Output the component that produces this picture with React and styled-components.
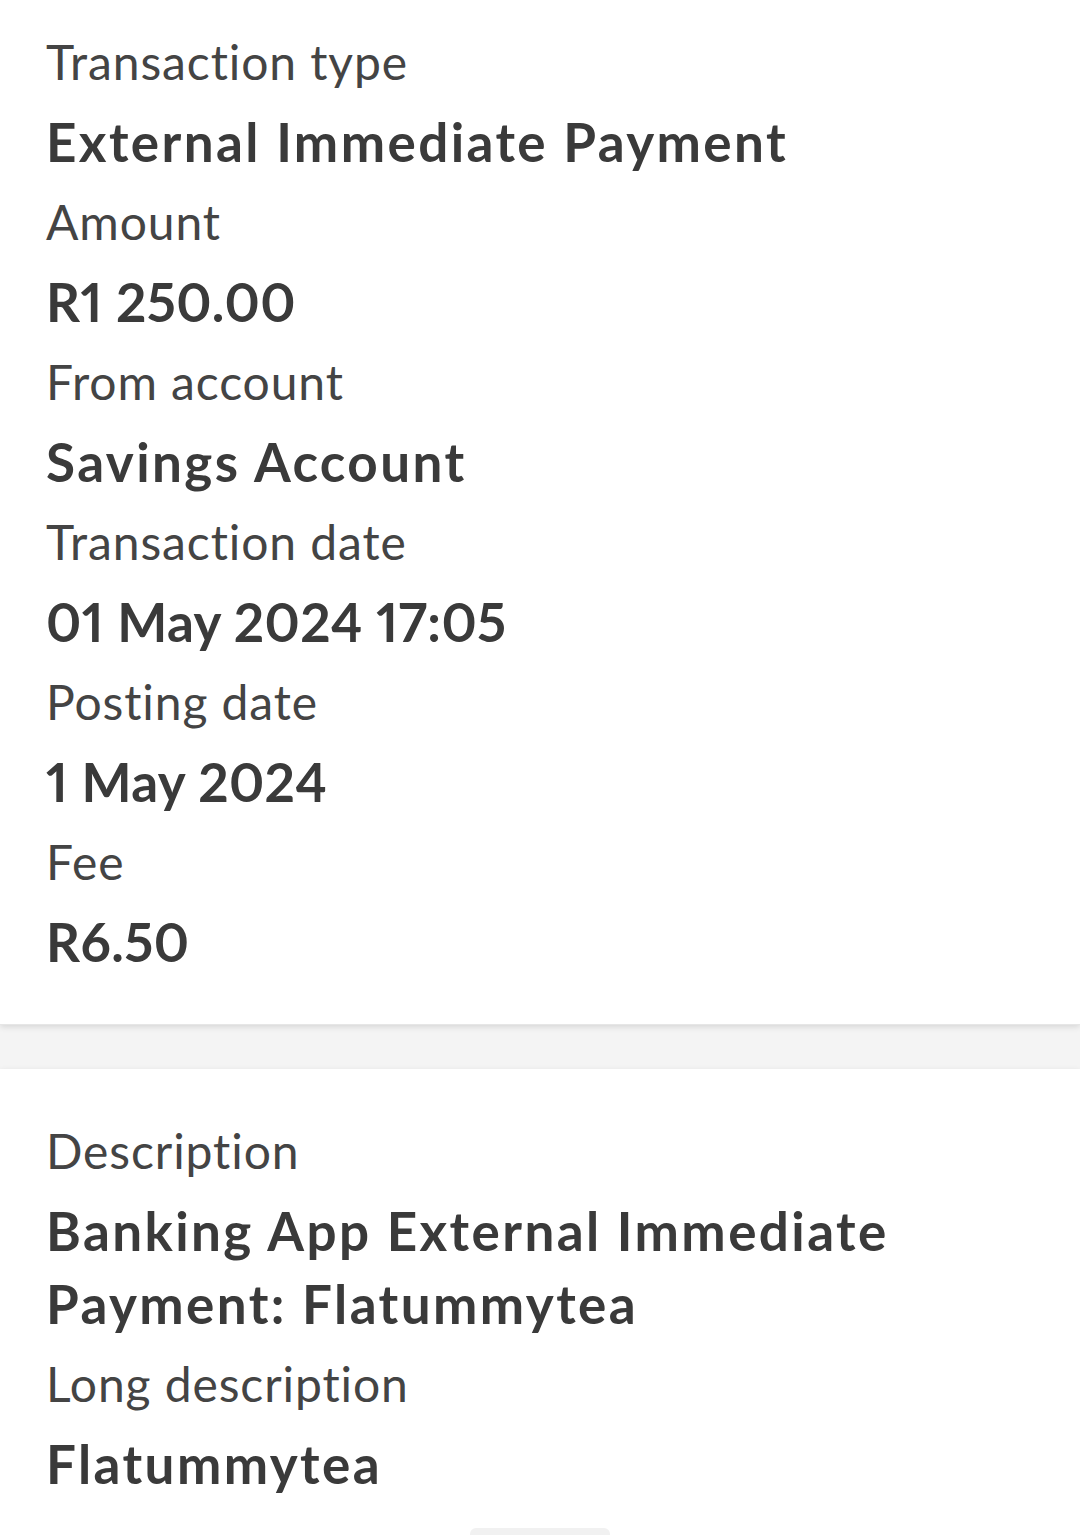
import React from 'react'
import styled, { createGlobalStyle } from 'styled-components'

const GlobalStyle = createGlobalStyle`
  html, body {
    margin: 0;
    padding: 0;
    background: #f4f4f4;
  }
  body {
    font-family: Lato, "Noto Sans", "Liberation Sans", sans-serif;
    -webkit-font-smoothing: antialiased;
  }
`

const Page = styled.div`
  width: 1080px;
  height: 1535px;
  overflow: hidden;
  display: flex;
  flex-direction: column;
  background: #f4f4f4;
`

const Card = styled.section`
  position: relative;
  background: #ffffff;
  padding: ${props => props.$pad};
  box-shadow: 0 2px 6px rgba(0, 0, 0, 0.12);
  border-bottom: 1px solid #e6e6e6;
`

const Spacer = styled.div`
  height: 44px;
  flex-shrink: 0;
`

const Last = styled(Card)`
  flex: 1;
  border-bottom: none;
  display: flex;
  flex-direction: column;
`

const Label = styled.div`
  font-size: 48px;
  line-height: 87px;
  font-weight: 400;
  color: #444444;
  letter-spacing: 0.9px;
`

const Value = styled.div`
  font-size: 53px;
  line-height: 73px;
  font-weight: 700;
  color: #3a3a3a;
  letter-spacing: ${props => (props.$num ? '0.4px' : '2.4px')};
  font-variant-numeric: proportional-nums;
  max-width: 900px;
`

const Handle = styled.div`
  align-self: center;
  margin-top: 28px;
  width: 140px;
  height: 12px;
  border-radius: 6px 6px 0 0;
  background: #f1f1f1;
`

const topRows = [
  ['Transaction type', 'External Immediate Payment'],
  ['Amount', 'R1 250.00'],
  ['From account', 'Savings Account'],
  ['Transaction date', '01 May 2024 17:05'],
  ['Posting date', '1 May 2024'],
  ['Fee', 'R6.50'],
]

const bottomRows = [
  ['Description', 'Banking App External Immediate Payment: Flatummytea'],
  ['Long description', 'Flatummytea'],
]

const Field = ({ label, value }) => (
  <>
    <Label>{label}</Label>
    <Value $num={/\d/.test(value)}>{value}</Value>
  </>
)

const App = () => (
  <Page>
    <GlobalStyle />
    <Card $pad="18px 46px 46px">
      {topRows.map(([l, v]) => (
        <Field key={l} label={l} value={v} />
      ))}
    </Card>
    <Spacer />
    <Last $pad="38px 46px 0">
      {bottomRows.map(([l, v]) => (
        <Field key={l} label={l} value={v} />
      ))}
      <Handle />
    </Last>
  </Page>
)

export default App
